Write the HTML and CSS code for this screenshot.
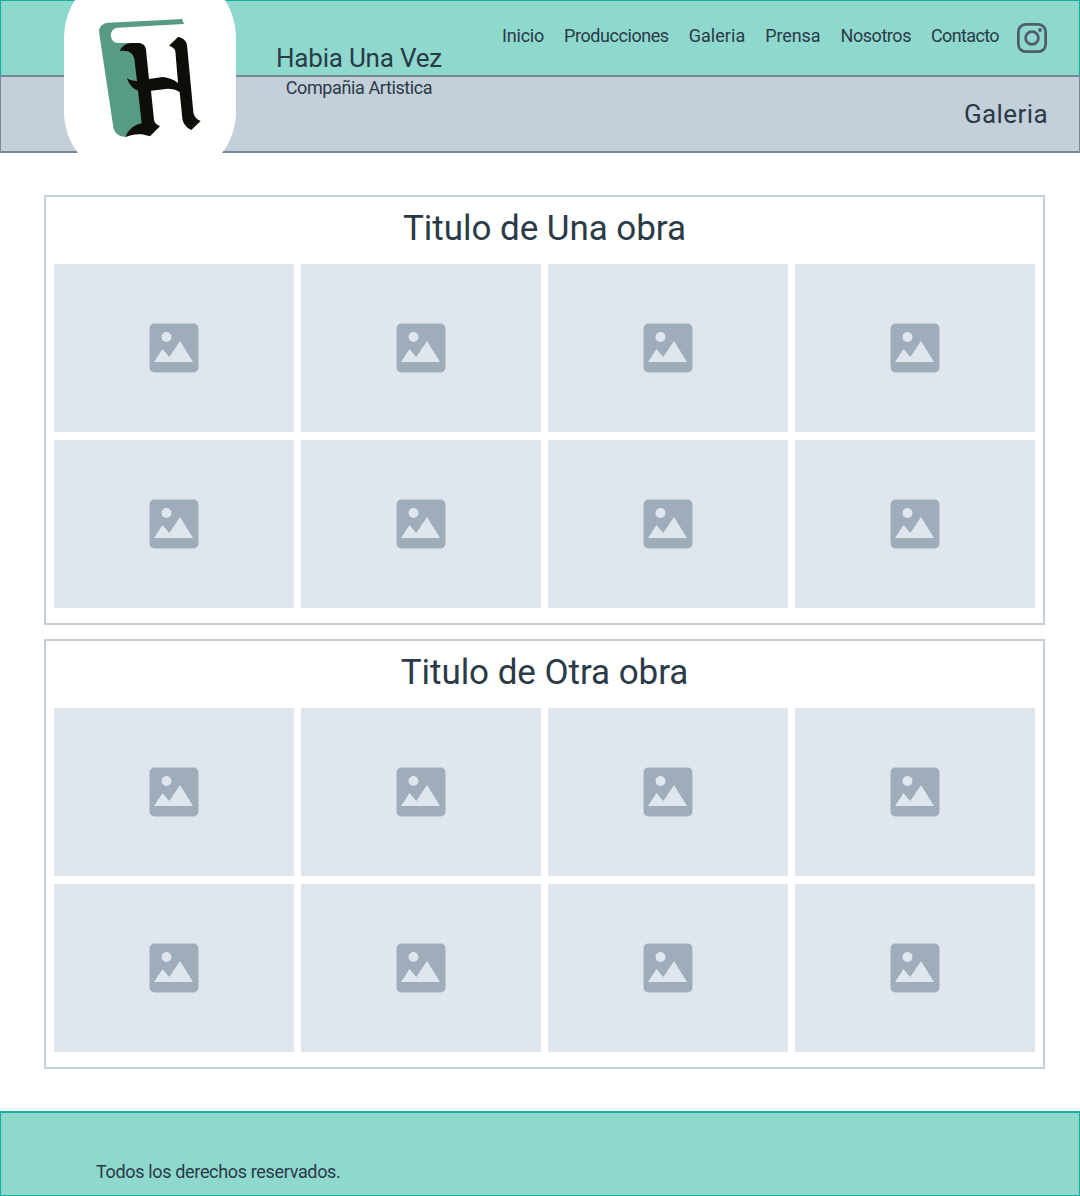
FILE: index.html
```html
<!DOCTYPE html>
<html lang="es">
<head>
<meta charset="utf-8">
<title>Habia Una Vez - Galeria</title>
<link rel="stylesheet" href="styles.css">
</head>
<body>
<svg class="sprite" aria-hidden="true">
  <symbol id="picture" viewBox="0 0 50 50">
    <path fill="#9eadb9" fill-rule="evenodd" d="M5.5.5h39a5 5 0 0 1 5 5v39a5 5 0 0 1-5 5h-39a5 5 0 0 1-5-5v-39a5 5 0 0 1 5-5zM17.5 9a5 5 0 1 0 0 10 5 5 0 0 0 0-10zM5 39H44L31 18 20.300 34 13.500 26z"/>
  </symbol>
</svg>
<header class="header">
  <div class="bar bar-top"></div>
  <div class="bar bar-title"><h1 class="page-title">Galeria</h1></div>
  <svg class="logo" viewBox="0 0 172 153">
    <path fill="#fff" d="M11 0C4 11 0 24 0 40V112C0 128 6 143 14 153H158C166 143 172 128 172 112V40C172 24 168 11 161 0Z"/>
    <g transform="scale(.33333) translate(-42 0)">
      <path fill="#579b86" d="M147 95C147 80 158 69 176 68L386 58 396 56 402 72 202 83C176 86 176 126 204 129H265L282 372 228 410C207 412 192 398 190 382Z"/>
      <path fill="#0d0e08" d="M209 153C216 137 230 129 246 129H266C281 130 287 139 288 150L297 237 338 231C357 233 370 238 384 249L376 153C373 144 366 140 357 137L384 111C399 113 409 122 411 135L430 336C432 350 439 357 452 363L424 390C409 384 398 369 397 355L389 277C379 268 366 266 353 266L303 272 312 360C314 369 320 374 330 379L300 409 276 403C258 401 244 404 226 411C236 389 252 374 275 370L264 272C248 267 237 253 231 235C240 241 249 243 261 243L253 177C249 159 237 150 209 153Z"/>
    </g>
  </svg>
  <div class="brand">
    <div class="brand-name">Habia Una Vez</div>
    <div class="brand-sub">Compañia Artistica</div>
  </div>
  <nav class="nav">
    <a class="link inicio">Inicio</a>
    <a class="link producciones">Producciones</a>
    <a class="link galeria">Galeria</a>
    <a class="link prensa">Prensa</a>
    <a class="link nosotros">Nosotros</a>
    <a class="link contacto">Contacto</a>
    <svg class="instagram" viewBox="0 0 30 30" fill="none" stroke="#4e5d6c">
      <rect x="1.350" y="1.350" width="27.300" height="27.300" rx="7.300" stroke-width="2.700"/>
      <circle cx="15" cy="15" r="6.400" stroke-width="2.700"/>
      <circle cx="23" cy="7" r="1.900" fill="#4e5d6c" stroke="none"/>
    </svg>
  </nav>
</header>
<main class="main">
  <section class="work">
    <h2 class="work-title">Titulo de Una obra</h2>
    <div class="grid">
      <div class="tile"><svg class="pic"><use href="#picture"/></svg></div>
      <div class="tile"><svg class="pic"><use href="#picture"/></svg></div>
      <div class="tile"><svg class="pic"><use href="#picture"/></svg></div>
      <div class="tile"><svg class="pic"><use href="#picture"/></svg></div>
      <div class="tile"><svg class="pic"><use href="#picture"/></svg></div>
      <div class="tile"><svg class="pic"><use href="#picture"/></svg></div>
      <div class="tile"><svg class="pic"><use href="#picture"/></svg></div>
      <div class="tile"><svg class="pic"><use href="#picture"/></svg></div>
    </div>
  </section>
  <section class="work">
    <h2 class="work-title">Titulo de Otra obra</h2>
    <div class="grid">
      <div class="tile"><svg class="pic"><use href="#picture"/></svg></div>
      <div class="tile"><svg class="pic"><use href="#picture"/></svg></div>
      <div class="tile"><svg class="pic"><use href="#picture"/></svg></div>
      <div class="tile"><svg class="pic"><use href="#picture"/></svg></div>
      <div class="tile"><svg class="pic"><use href="#picture"/></svg></div>
      <div class="tile"><svg class="pic"><use href="#picture"/></svg></div>
      <div class="tile"><svg class="pic"><use href="#picture"/></svg></div>
      <div class="tile"><svg class="pic"><use href="#picture"/></svg></div>
    </div>
  </section>
</main>
<footer class="footer">Todos los derechos reservados.</footer>
</body>
</html>
```
FILE: styles.css
```css
* { box-sizing: border-box; }
body {
  margin: 0;
  width: 1080px;
  min-height: 1196px;
  display: flex;
  flex-direction: column;
  background: #fff;
  color: #2b3a47;
  font-family: Roboto, "Liberation Sans", sans-serif;
}
.sprite { display: none; }
.header {
  display: grid;
  grid-template-columns: 64px 172px 30px 186px 1fr;
  grid-template-rows: 75px 78px;
}
.bar-top {
  grid-area: 1 / 1 / 2 / -1;
  background: #8ed8ce;
  border: 1px solid #1bae9c;
  border-bottom: 0;
}
.bar-title {
  grid-area: 2 / 1 / 3 / -1;
  display: flex;
  justify-content: flex-end;
  padding: 21px 31px 0 0;
  background: #c3cfd9;
  border: solid #778899;
  border-width: 2px 1px;
}
.page-title {
  margin: 0;
  font-size: 26px;
  font-weight: 400;
  line-height: 32px;
  letter-spacing: .4px;
}
.logo { grid-area: 1 / 2 / 3 / 3; width: 172px; height: 153px; }
.brand { grid-area: 1 / 4 / 3 / 5; padding-top: 42px; text-align: center; white-space: nowrap; }
.brand-name { font-size: 26px; line-height: 32px; letter-spacing: -.2px; }
.brand-sub { font-size: 18px; line-height: 28px; letter-spacing: -.39px; }
.nav {
  grid-area: 1 / 5 / 2 / 6;
  display: flex;
  justify-content: flex-end;
  gap: 20px;
  padding: 23px 33px 0 0;
  font-size: 18px;
  line-height: 26px;
}
.inicio { letter-spacing: -.2px; }
.producciones { letter-spacing: -.44px; }
.galeria { letter-spacing: .04px; }
.prensa { letter-spacing: -.1px; }
.nosotros { letter-spacing: -.44px; }
.contacto { letter-spacing: -.63px; }
.instagram { width: 30px; height: 30px; flex: none; margin-left: -2px; }
.main {
  display: flex;
  flex-direction: column;
  gap: 14px;
  padding: 42px 35px 42px 44px;
}
.work { height: 430px; border: 2px solid #c3cfd9; padding: 0 8px; }
.work-title {
  margin: 0;
  height: 67px;
  padding-top: 10px;
  font-size: 35px;
  font-weight: 400;
  line-height: 44px;
  letter-spacing: -.05px;
  text-align: center;
}
.grid {
  display: grid;
  grid-template-columns: repeat(4, 240px);
  grid-auto-rows: 168px;
  gap: 8px 7px;
}
.tile { display: flex; align-items: center; justify-content: center; background: #dfe6ee; }
.pic { width: 50px; height: 50px; }
.footer {
  height: 85px;
  padding: 46px 0 0 95px;
  border: solid #1bae9c;
  border-width: 2px 1px 1px;
  background: #8ed8ce;
  font-size: 18px;
  line-height: 26px;
  letter-spacing: -.34px;
}
```
